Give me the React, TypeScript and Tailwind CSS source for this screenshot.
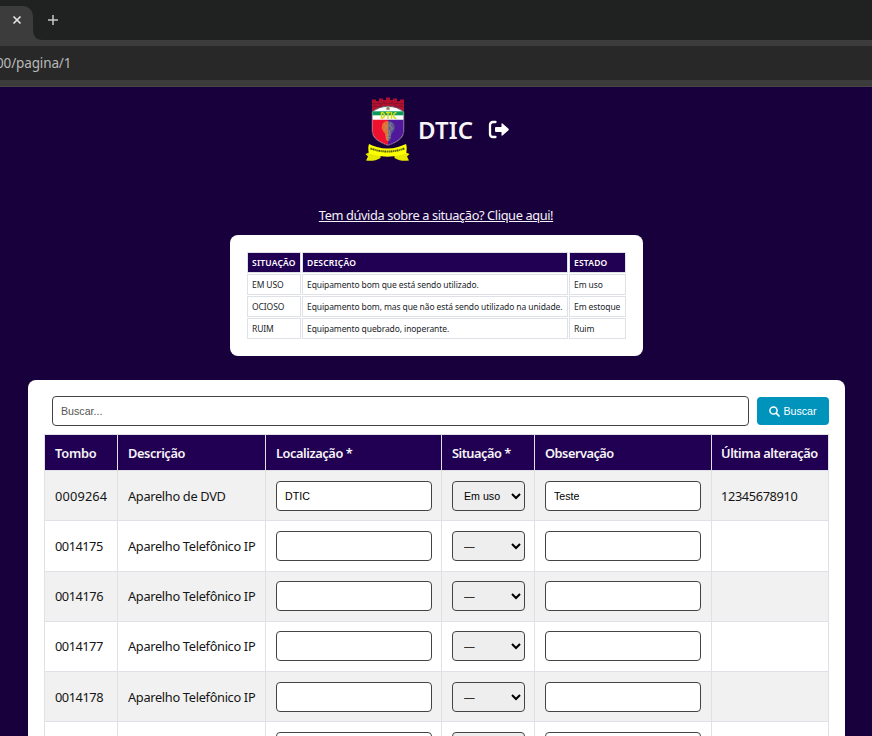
import React from "react";
import { FaSearch } from "react-icons/fa";

const rows = [
  { tombo: "0009264", desc: "Aparelho de DVD", loc: "DTIC", sit: "Em uso", obs: "Teste", alt: "12345678910", box: "h-[50px] pt-[10px] bg-[#f1f1f1]", num: "tracking-[0.15px]" },
  { tombo: "0014175", desc: "Aparelho Telefônico IP", loc: "", sit: "—", obs: "", alt: "", box: "h-[51px] pt-[10px] bg-white", num: "tracking-[-0.5px]" },
  { tombo: "0014176", desc: "Aparelho Telefônico IP", loc: "", sit: "—", obs: "", alt: "", box: "h-[50px] pt-[9px] bg-[#f1f1f1]", num: "tracking-[-0.45px]" },
  { tombo: "0014177", desc: "Aparelho Telefônico IP", loc: "", sit: "—", obs: "", alt: "", box: "h-[50px] pt-[9px] bg-white", num: "tracking-[-0.5px]" },
  { tombo: "0014178", desc: "Aparelho Telefônico IP", loc: "", sit: "—", obs: "", alt: "", box: "h-[50px] pt-[10px] bg-[#f1f1f1]", num: "tracking-[-0.45px]" },
  { tombo: "", desc: "", loc: "", sit: "", obs: "", alt: "", box: "h-[50px] pt-[10px] bg-white", num: "" },
];

const headers = [
  { text: "Tombo", cls: "tracking-[-0.2px]" },
  { text: "Descrição", cls: "tracking-[-0.4px]" },
  { text: "Localização *", cls: "tracking-[-0.42px]" },
  { text: "Situação *", cls: "tracking-[-0.5px]" },
  { text: "Observação", cls: "tracking-[-0.5px]" },
  { text: "Última alteração", cls: "-ml-px tracking-[-0.42px]" },
];

const info = [
  ["EM USO", "Equipamento bom que está sendo utilizado.", "Em uso"],
  ["OCIOSO", "Equipamento bom, mas que não está sendo utilizado na unidade.", "Em estoque"],
  ["RUIM", "Equipamento quebrado, inoperante.", "Ruim"],
];

const field =
  "block h-[30px] rounded-[4px] border border-[#444] bg-white px-2 font-['Liberation_Sans',Arial,sans-serif] text-[10.67px] text-black outline-none";

function Crest() {
  return (
    <svg width="46" height="65" viewBox="0 0 46 65" className="block shrink-0">
      <path d="M7 15V2.500h4V4h3V1.500h4V3h3V.5h4V3h3V1.500h4V4h3V2.500h4V15z" fill="#b3102e" />
      <path d="M7 6.500h32M7 9.500h32M13 4v2.500M19 4v2.500M27 4v2.500M33 4v2.500M10 6.500v3M16 6.500v3M30 6.500v3M36 6.500v3" stroke="#7c1230" strokeWidth=".6" />
      <path d="M7 14.500Q23 3.500 39 14.500V33c0 8.500-6.500 12-16 15.500C13.500 45 7 41.500 7 33z" fill="#fff" stroke="#54405a" strokeWidth=".9" />
      <path d="M7.500 14.300h31v4h-31z" fill="#0b9a5b" />
      <path d="M7.500 22.800H23V48C13.500 44.500 7.500 41 7.500 33z" fill="#f01030" />
      <path d="M23 22.800h15.500V33c0 8-6 11.500-15.500 15z" fill="#50189a" />
      <path d="m23 9 .8 1.600 1.800.1-1.400 1.100.5 1.700-1.700-1-1.700 1 .5-1.700-1.400-1.100 1.800-.1z" fill="#8d7a4b" />
      <path d="M16.500 15v6.500M16.500 15.500h1q2 .5 2 2.800t-2 2.800h-1M20.800 15.500h4.400M23 15.500v6.500M26.500 15v7M31.500 15.700q-2.800-.4-2.800 2.800t2.800 2.800" fill="none" stroke="#d5dc13" strokeWidth="1.500" />
      <path d="M23 24c-5 0-7 4-6 8 1 3 3.500 4 3.500 7l.5 4 2 1.500z" fill="#ea6a2e" />
      <path d="M23 24c5 0 7.500 4 6.500 8-1 3-3.500 4-3.500 7l-.5 4-2.500 1.500z" fill="#5d5a90" />
      <path d="M19 27l2.500 2-2 3 2 2.500M26 26l-1.500 3 3 2-3 3 .5 3M23 25v19M20.500 38h5.500M21 40.500h4.500" fill="none" stroke="#a29a78" strokeWidth=".8" />
      <path d="M4 55.500L.5 57l2.500 2.500L1 63.500c5 .8 10 .3 14.500-2.500V57zM41 55.500l3.500 1.500-2.500 2.500 2 4c-5 .8-10 .3-14.500-2.500V57z" fill="#e6e800" />
      <path d="M9 57l6.500 2v-2.500zM36 57l-6.500 2v-2.500z" fill="#5b6108" />
      <path d="M4 47Q2.500 51 4 56.500Q22.500 63 41 56.500Q42.500 51 41 47Q36 49 33 50Q22.500 53 12 50Q8 49 4 47z" fill="#fcff00" />
      <path d="M5.500 51.500Q22.500 57.500 39.500 51.500" fill="none" stroke="#4a5010" strokeWidth="2" strokeDasharray="1.300 .7 2 .6 .8 .7" />
    </svg>
  );
}

export default function App() {
  return (
    <div className="h-[736px] w-[872px] overflow-hidden bg-[#17003c] font-['Noto_Sans',sans-serif]">
      <div className="flex h-10 bg-[#202221]">
        <div className="flex w-[33px] flex-col bg-[#202221]">
          <div className="mt-[6px] flex h-[34px] w-[33px] items-start rounded-tr-[10px] bg-[#3c3c3c]">
            <svg className="mt-[9px] ml-[12px]" width="10" height="10" viewBox="0 0 10 10">
              <path d="M1.500 1.500l7 7M8.500 1.500l-7 7" stroke="#e3e3e3" strokeWidth="1.700" />
            </svg>
          </div>
        </div>
        <svg className="mt-[30px]" width="10" height="10" viewBox="0 0 10 10">
          <path d="M0 0Q0 10 10 10H0z" fill="#3c3c3c" />
        </svg>
        <svg className="mt-[15px] ml-[5px]" width="10" height="10" viewBox="0 0 10 10">
          <path d="M5 0v10M0 5h10" stroke="#c7c7c7" strokeWidth="1.500" />
        </svg>
      </div>
      <div className="h-[47px] border-b border-[#484747] bg-[#3c3c3c] pt-[6px]">
        <div className="flex h-[34px] items-center bg-[#282828]">
          <span className="-ml-[4px] whitespace-pre text-[13.500px] tracking-[-0.13px] text-[#b8b8b8]">00/pagina/1</span>
        </div>
      </div>

      <header className="flex h-[74px] pl-[365px] pt-[10px]">
        <Crest />
        <h1 className="ml-[7px] mt-[15px] text-[24px] leading-[36px] font-semibold tracking-[0.1px] text-[#f5f5f7]">DTIC</h1>
        <svg className="ml-[15px] mt-[23px]" width="22" height="20" viewBox="0 0 22 20">
          <path d="M7.500 2H5Q2 2 2 5v9q0 3 3 3h2.500" fill="none" stroke="#fff" strokeWidth="2.300" strokeLinecap="round" />
          <path d="M8 7h5.500V4q0-1.300 1-.5l6 5.300q.7.700 0 1.400l-6 5.300q-1 .8-1-.5v-3H8q-1 0-1-1V8q0-1 1-1z" fill="#fff" />
        </svg>
      </header>

      <div className="flex h-[74px] items-end justify-center pb-[10px]">
        <a className="whitespace-nowrap text-[12.800px] leading-[20px] tracking-[-0.39px] text-[#f3f1f6] underline">Tem dúvida sobre a situação? Clique aqui!</a>
      </div>

      <section className="ml-[230px] h-[121px] w-[413px] rounded-lg bg-white pt-[17px] pl-[17px]">
        <div className="grid w-[379px] grid-cols-[54px_266px_57px] gap-px text-[8.500px] leading-[19px] whitespace-nowrap text-[#212529]">
          {["SITUAÇÃO", "DESCRIÇÃO", "ESTADO"].map((h) => (
            <div key={h} className="h-[21px] border border-[#dee2e6] bg-[#210053] pl-1 font-semibold tracking-[0.2px] text-white">{h}</div>
          ))}
          {info.flat().map((c) => (
            <div key={c} className="h-[21px] border border-[#dee2e6] pl-1 tracking-[-0.1px]">{c}</div>
          ))}
        </div>
      </section>

      <main className="mt-6 ml-7 h-[400px] w-[817px] rounded-lg bg-white pt-4 pl-4">
        <div className="flex items-center gap-2 pl-2">
          <input className={field + " w-[697px] placeholder:text-[#555]"} placeholder="Buscar..." />
          <button className="flex h-7 w-[72px] items-center justify-center gap-[3px] rounded-[4px] bg-[#0094bd] font-['Liberation_Sans',Arial,sans-serif] text-[10.670px] text-white">
            <svg width="11" height="11" viewBox="0 0 11 11">
              <path d="M7.200 7.200L10 10" stroke="#fff" strokeWidth="1.700" strokeLinecap="round" />
              <circle cx="4.500" cy="4.500" r="3.600" fill="none" stroke="#fff" strokeWidth="1.500" />
            </svg>
            <span>Buscar</span>
          </button>
        </div>
        <div className="mt-2 w-[785px] border-t border-l border-[#dee2e6] text-[12.800px] text-[#151515]">
          <div className="grid h-9 grid-cols-[73px_148px_176px_93px_177px_117px] border-b border-[#dee2e6] bg-[#210053] font-semibold whitespace-nowrap text-[#f6f4f8]">
            {headers.map((h) => (
              <div key={h.text} className="border-r border-[#dee2e6] pl-[10px] leading-[36px]">
                <span className={h.cls}>{h.text}</span>
              </div>
            ))}
          </div>
          {rows.map((r, i) => (
            <div key={i} className="grid grid-cols-[73px_148px_176px_93px_177px_117px] leading-[30px] whitespace-nowrap *:border-r *:border-b *:border-[#dee2e6] *:pl-[10px]">
              <div className={r.box + " " + r.num}>{r.tombo}</div>
              <div className={r.box + " tracking-[-0.32px]"}>{r.desc}</div>
              <div className={r.box}><input className={field + " w-[156px]"} defaultValue={r.loc} /></div>
              <div className={r.box}>
                <select className="block h-[30px] w-[73px] rounded-[4px] border border-[#444] bg-[#eee] pl-[7px] font-['Liberation_Sans',Arial,sans-serif] text-[10.670px] text-black">
                  <option>{r.sit}</option>
                </select>
              </div>
              <div className={r.box}><input className={field + " w-[156px]"} defaultValue={r.obs} /></div>
              <div className={r.box}><span className="-ml-px tracking-[-0.38px]">{r.alt}</span></div>
            </div>
          ))}
        </div>
      </main>
    </div>
  );
}
